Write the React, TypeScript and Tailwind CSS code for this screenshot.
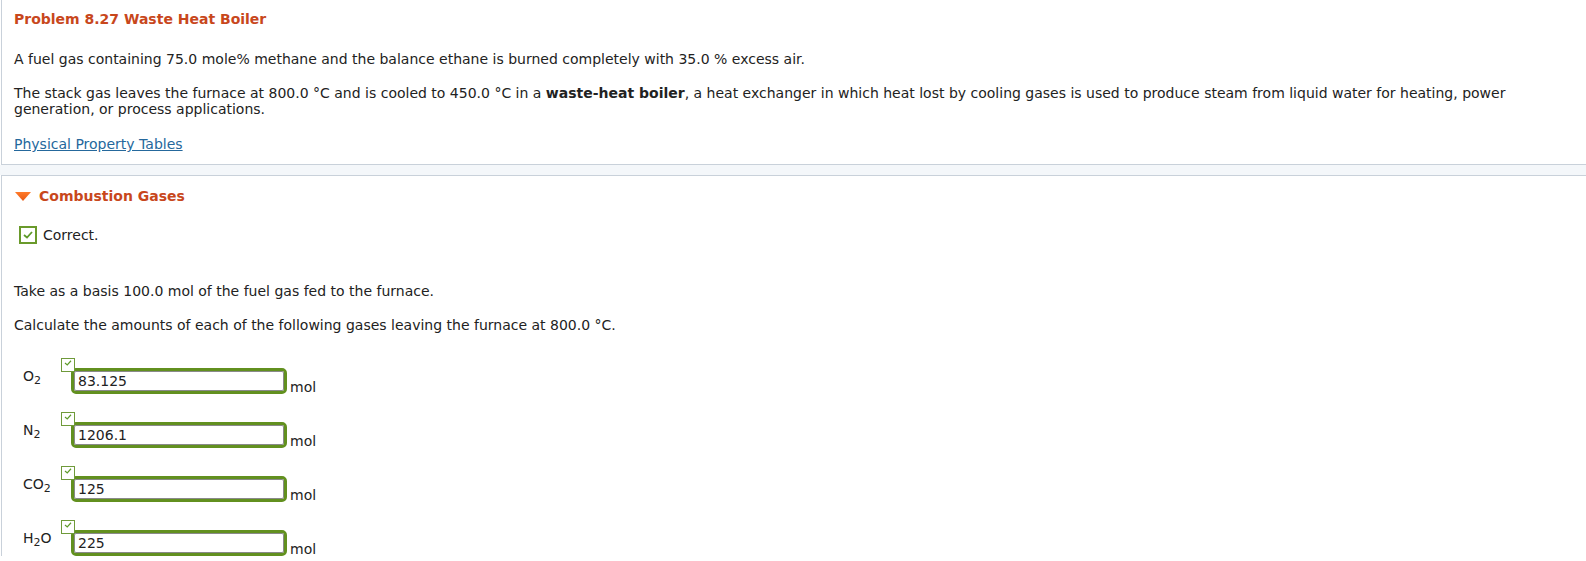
import React from 'react';

const font = { fontFamily: '"DejaVu Sans", Verdana, sans-serif' };

const SmallCheck: React.FC = () => (
  <svg viewBox="0 0 10 8" className="w-[8px] h-[6px]">
    <path d="M1 4 L4 6.5 L9 1" fill="none" stroke="#5e9a2a" strokeWidth={1.6} />
  </svg>
);

// Одна строка ввода: метка, поле с галочкой и единица измерения
const GasRow: React.FC<{ label: React.ReactNode; value: string }> = ({ label, value }) => (
  <div className="flex items-start">
    <div className="w-[47px] pl-[9px] mt-[10px] text-[14px] leading-[16px] text-[#222]">{label}</div>
    <div className="relative">
      <div className="absolute left-0 top-0 z-10 w-[14px] h-[14px] border-[1.5px] border-[#6f9a3a] bg-white flex items-start justify-center pt-[1px]">
        <SmallCheck />
      </div>
      <div className="flex items-end">
        <div className="ml-[10px] mt-[10px] w-[216px] h-[26px] border-[3px] border-[#62901f] rounded-[5px] bg-white">
          <div className="h-full w-full border border-[#8a8a8a] rounded-[2px] px-[3px] text-[14px] leading-[18px] text-[#222]">
            {value}
          </div>
        </div>
        <span className="ml-[3px] text-[14px] leading-[16px] text-[#222] mb-[-1px]">mol</span>
      </div>
    </div>
  </div>
);

const Sub: React.FC<{ children: React.ReactNode }> = ({ children }) => (
  <span className="text-[11px] relative top-[3px]">{children}</span>
);

export default function App() {
  return (
    <div className="w-[1586px] h-[561px] overflow-hidden bg-white text-[14px] text-[#222]" style={font}>
      <div className="ml-px border-l border-b border-[#c9d1da] pl-[12px] pt-[11px] pb-[12px] leading-[16px]">
        <h1 className="font-bold text-[#c8471c] text-[14px] leading-[16px]">Problem 8.27 Waste Heat Boiler</h1>
        <p className="mt-[24px]">
          A fuel gas containing 75.0 mole% methane and the balance ethane is burned completely with 35.0 % excess air.
        </p>
        <p className="mt-[18px] pr-[20px]">
          The stack gas leaves the furnace at 800.0 °C and is cooled to 450.0 °C in a <b>waste-heat boiler</b>, a heat exchanger in which heat lost by cooling gases is used to produce steam from liquid water for heating, power generation, or process applications.
        </p>
        <p className="mt-[19px]">
          <a href="#" className="text-[#25689c] underline">Physical Property Tables</a>
        </p>
      </div>
      <div className="h-[10px] bg-[#f4f7fa]" />
      <div className="ml-px border-l border-t border-[#c9d1da] pl-[12px] pt-[12px] leading-[16px]">
        <div className="flex items-center">
          <svg viewBox="0 0 16 9" className="w-[16px] h-[9px] ml-px mt-[1px]">
            <defs>
              <linearGradient id="tri" x1="0" y1="0" x2="0" y2="1">
                <stop offset="0" stopColor="#ff7a2a" />
                <stop offset="1" stopColor="#e85a14" />
              </linearGradient>
            </defs>
            <polygon points="0,0 16,0 8,9" fill="url(#tri)" />
          </svg>
          <span className="ml-[8px] font-bold text-[#c8471c]">Combustion Gases</span>
        </div>
        <div className="mt-[22px] flex items-center ml-[5px]">
          <div className="w-[18px] h-[18px] border-2 border-[#6a9a2b] flex items-center justify-center">
            <svg viewBox="0 0 10 8" className="w-[10px] h-[8px]">
              <path d="M1 4 L4 6.5 L9 1" fill="none" stroke="#5e9a2a" strokeWidth={1.8} />
            </svg>
          </div>
          <span className="ml-[6px]">Correct.</span>
        </div>
        <p className="mt-[39px]">Take as a basis 100.0 mol of the fuel gas fed to the furnace.</p>
        <p className="mt-[18px]">Calculate the amounts of each of the following gases leaving the furnace at 800.0 °C.</p>
        <div className="mt-[25px] flex flex-col gap-[18px]">
          <GasRow label={<>O<Sub>2</Sub></>} value="83.125" />
          <GasRow label={<>N<Sub>2</Sub></>} value="1206.1" />
          <GasRow label={<>CO<Sub>2</Sub></>} value="125" />
          <GasRow label={<>H<Sub>2</Sub>O</>} value="225" />
        </div>
      </div>
    </div>
  );
}
